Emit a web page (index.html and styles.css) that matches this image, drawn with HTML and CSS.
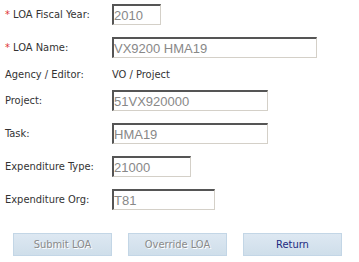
FILE: index.html
```html
<!DOCTYPE html>
<html lang="en">
<head>
  <meta charset="UTF-8">
  <title>LOA</title>
  <link rel="stylesheet" href="styles.css">
</head>
<body>

  <form class="loa-form">
    <div class="row">
      <label class="lbl"><span class="req">*</span> LOA Fiscal Year:</label>
      <input type="text" class="fld w-year" value="2010" readonly>
    </div>
    <div class="row">
      <label class="lbl"><span class="req">*</span> LOA Name:</label>
      <input type="text" class="fld w-name" value="VX9200 HMA19" readonly>
    </div>
    <div class="row row-text">
      <label class="lbl">Agency / Editor:</label>
      <span class="val">VO / Project</span>
    </div>
    <div class="row">
      <label class="lbl">Project:</label>
      <input type="text" class="fld w-mid" value="51VX920000" readonly>
    </div>
    <div class="row">
      <label class="lbl">Task:</label>
      <input type="text" class="fld w-mid" value="HMA19" readonly>
    </div>
    <div class="row">
      <label class="lbl">Expenditure Type:</label>
      <input type="text" class="fld w-type" value="21000" readonly>
    </div>
    <div class="row">
      <label class="lbl">Expenditure Org:</label>
      <input type="text" class="fld w-org" value="T81" readonly>
    </div>

    <div class="buttons">
      <button type="button" class="btn" disabled>Submit LOA</button>
      <button type="button" class="btn" disabled>Override LOA</button>
      <button type="button" class="btn">Return</button>
    </div>
  </form>

</body>
</html>
```

FILE: styles.css
```css
body {
  margin: 0;
  background: #fff;
  font-family: "DejaVu Sans Condensed", "DejaVu Sans", sans-serif;
  font-size: 11px;
  color: #333;
}
.loa-form {
  padding: 4px 0 0 5px;
}
.row {
  display: flex;
  align-items: center;
  height: 21px;
  margin-bottom: 12px;
}
.row-text {
  height: 17px;
  margin-top: -4px;
  margin-bottom: 7px;
}
.lbl {
  width: 107px;
  flex: none;
}
.req {
  color: #d33;
}
.val {
  color: #333;
}
.fld {
  box-sizing: border-box;
  height: 21px;
  padding: 0;
  font-family: "Liberation Sans", Arial, sans-serif;
  font-size: 13px;
  color: #888;
  background: #fff;
  border-style: solid;
  border-width: 2px 1px 1px 2px;
  border-color: #555 #d4d0c8 #d4d0c8 #555;
  outline: none;
}
.w-year { width: 49px; }
.w-name { width: 205px; }
.w-mid { width: 156px; }
.w-type { width: 79px; }
.w-org { width: 103px; }
.buttons {
  display: flex;
  gap: 16px;
  margin: 23px 0 0 8px;
}
.btn {
  width: 99px;
  height: 23px;
  font-family: "DejaVu Sans Condensed", "DejaVu Sans", sans-serif;
  font-size: 11px;
  color: #1c2a80;
  background: linear-gradient(#dde8f2, #cfdeea);
  border: 1px solid #c3d6e6;
  border-radius: 0;
}
.btn:disabled {
  color: #8a8a8a;
  text-shadow: 1px 1px 0 #fff;
}
```
